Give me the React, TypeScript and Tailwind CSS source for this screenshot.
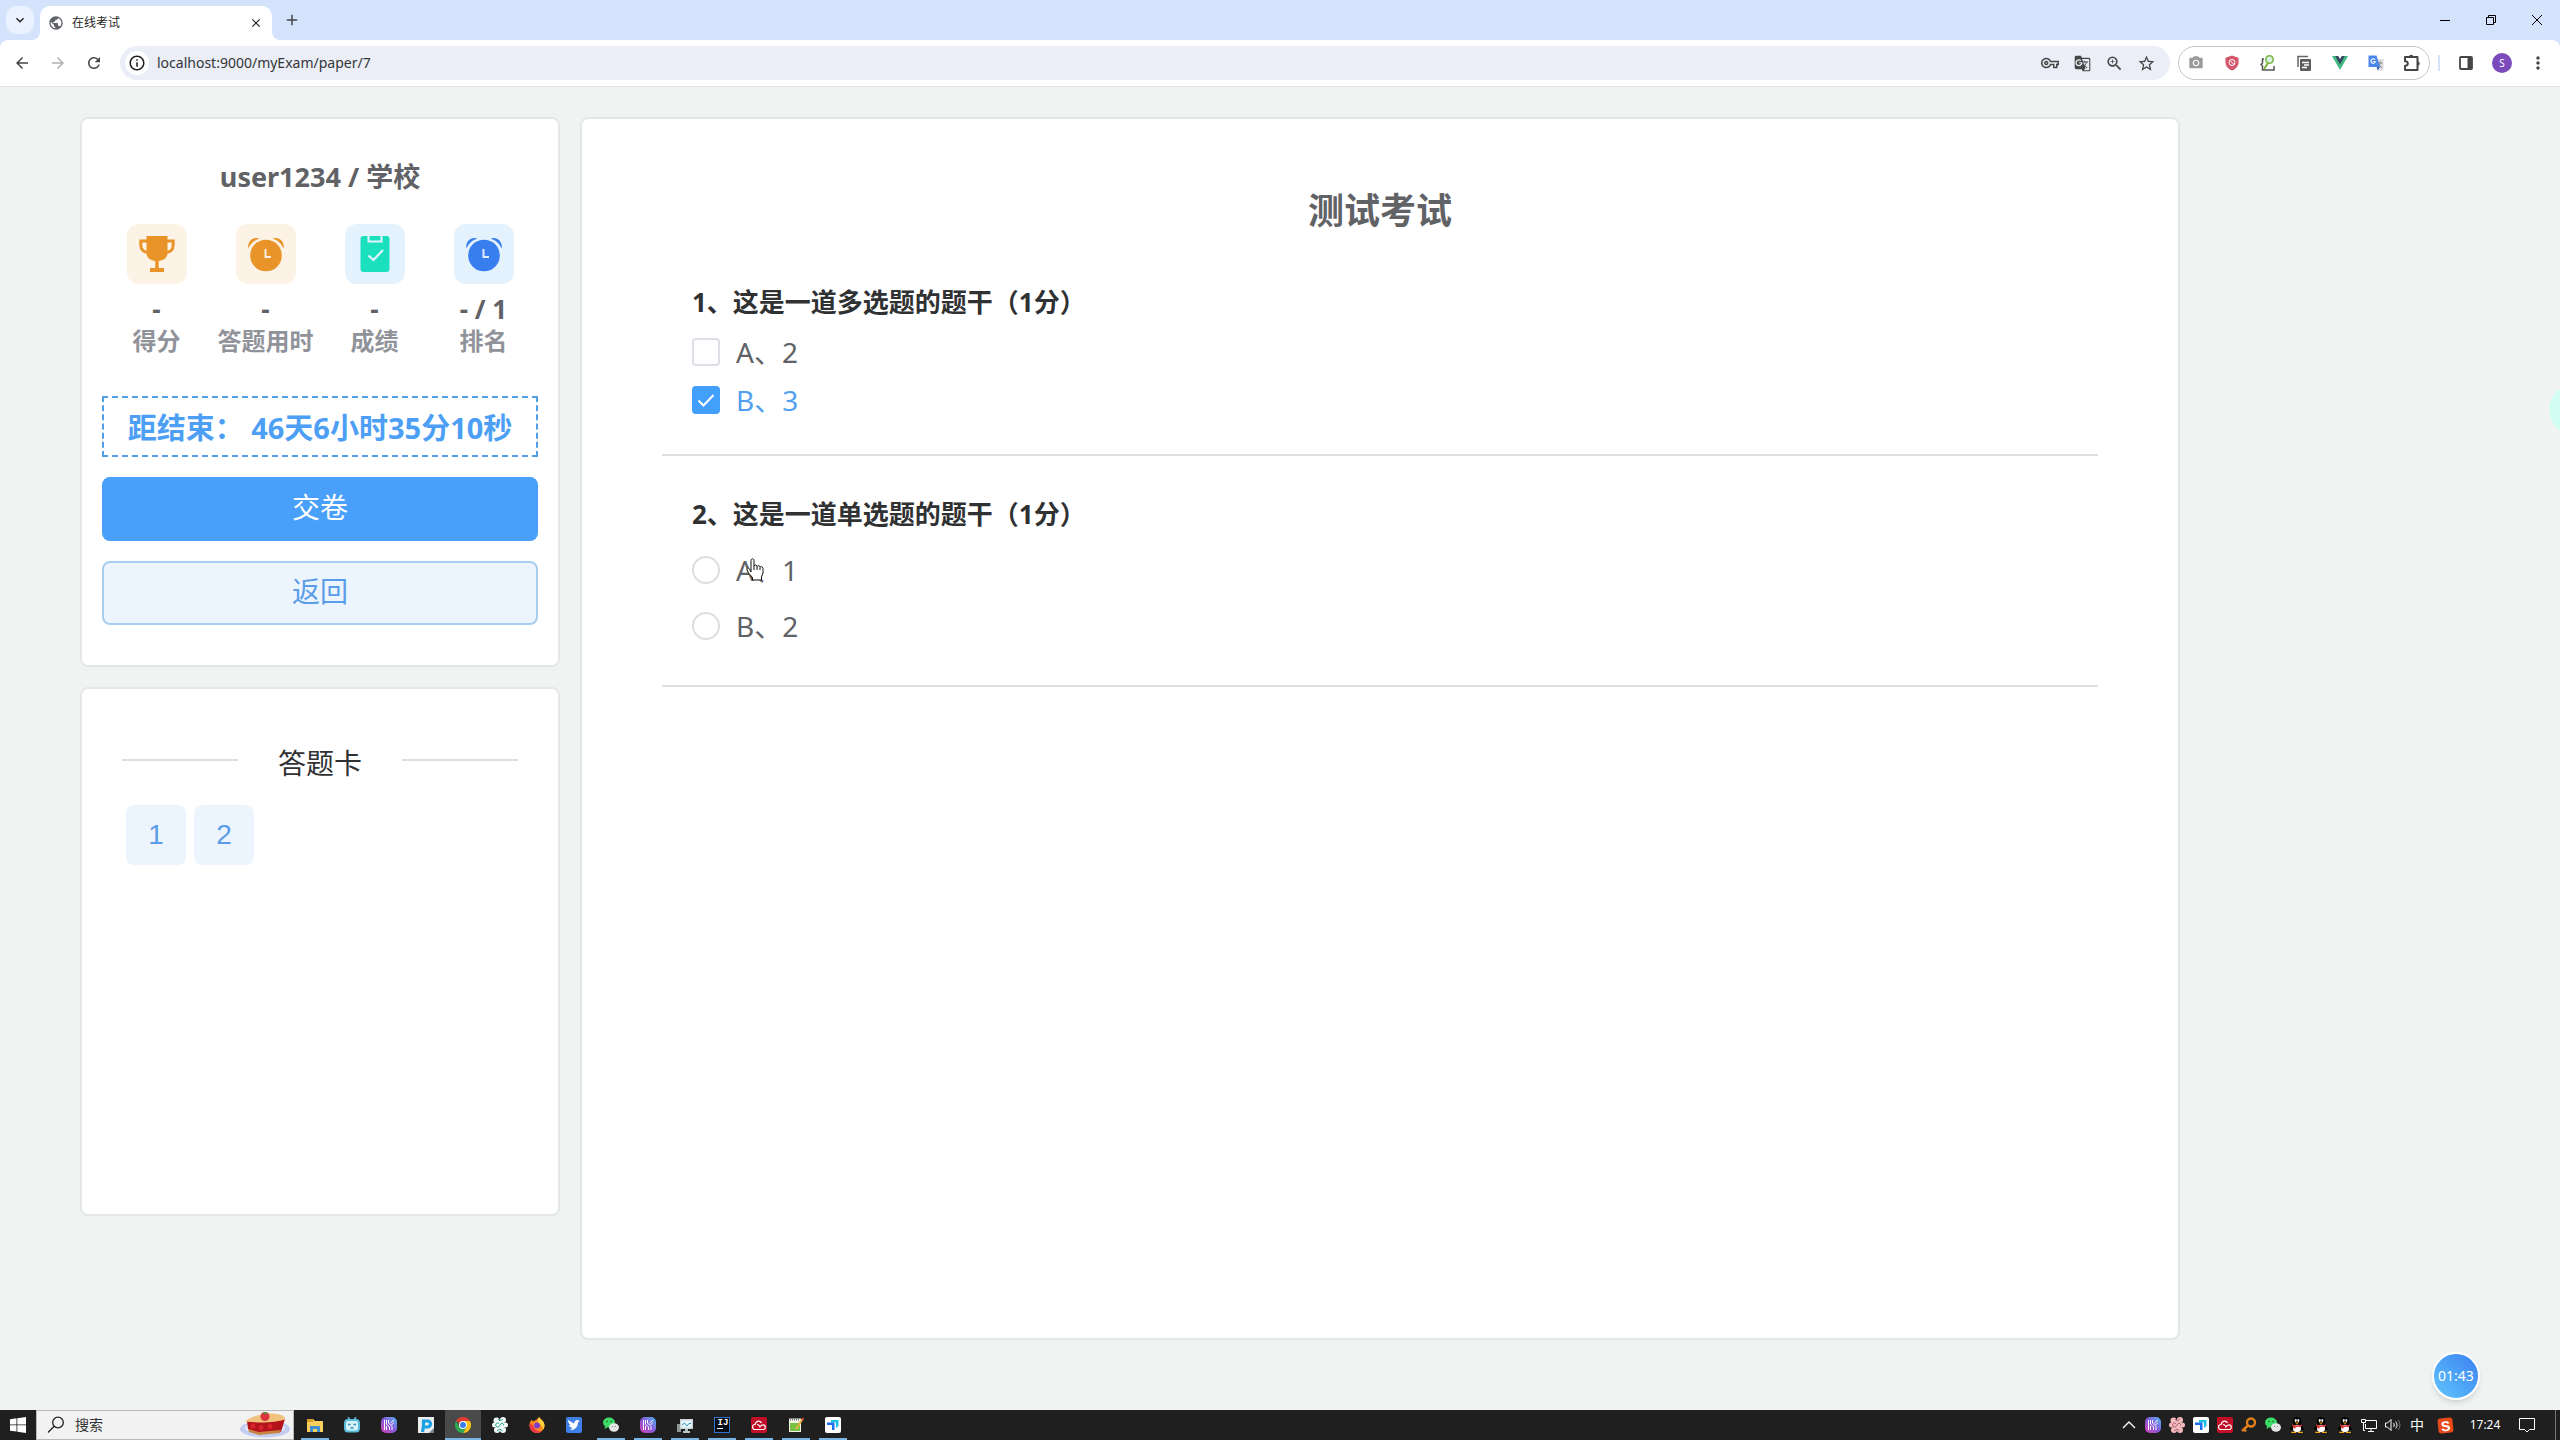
import React, { useState } from 'react';
import {
  MdAdd,
  MdArrowBack,
  MdArrowForward,
  MdCameraAlt,
  MdClose,
  MdExpandMore,
  MdGTranslate,
  MdMoreVert,
  MdOutlineExtension,
  MdOutlineInfo,
  MdOutlineVpnKey,
  MdPublic,
  MdRefresh,
  MdStarBorder,
  MdZoomIn,
} from 'react-icons/md';

/* ---------- browser window ---------- */

const TabStrip: React.FC = () => (
  <div className="flex h-10 items-end bg-[#d5e2fb] pl-1.5">
    <button aria-label="搜索标签页" className="mb-1.5 flex size-7 items-center justify-center rounded-[10px] bg-[#e9f2fe]">
      <MdExpandMore className="size-4 text-[#1f1f1f]" />
    </button>
    <div className="relative ml-1.5 flex h-[34px] w-[232px] items-center rounded-t-[10px] bg-white pr-2 pl-2">
      {/* feet of the active tab */}
      <span className="absolute bottom-0 -left-2 size-2 bg-white">
        <span className="block size-2 rounded-br-lg bg-[#d5e2fb]" />
      </span>
      <span className="absolute -right-2 bottom-0 size-2 bg-white">
        <span className="block size-2 rounded-bl-lg bg-[#d5e2fb]" />
      </span>
      <MdPublic className="size-4 text-[#5f6368]" />
      <span className="ml-2 flex-1 text-xs leading-4 text-[#1f1f1f]">在线考试</span>
      <button aria-label="关闭标签页" className="flex size-4 items-center justify-center">
        <MdClose className="size-3.5 text-[#1f1f1f]" />
      </button>
    </div>
    <button aria-label="新标签页" className="mb-2.5 ml-2.5 flex size-5 items-center justify-center">
      <MdAdd className="size-[18px] text-[#444746]" />
    </button>
    <div className="ml-auto flex h-10 text-black">
      <button aria-label="最小化" className="flex w-[46px] items-center justify-center">
        <svg className="size-2.5" viewBox="0 0 10 10" stroke="currentColor"><path d="M0 5.5h10" /></svg>
      </button>
      <button aria-label="还原" className="flex w-[46px] items-center justify-center">
        <svg className="size-2.5" viewBox="0 0 10 10" fill="none" stroke="currentColor">
          <path d="M.5 2.5h7v7h-7zM2.5 2.5v-2h7v7h-2" />
        </svg>
      </button>
      <button aria-label="关闭" className="flex w-[46px] items-center justify-center">
        <svg className="size-2.5" viewBox="0 0 10 10" fill="none" stroke="currentColor"><path d="M0 0l10 10M10 0L0 10" /></svg>
      </button>
    </div>
  </div>
);

const extButton = 'flex w-9 shrink-0 items-center justify-center';

const Toolbar: React.FC = () => (
  <div className="bg-[#d5e2fb]">
    <div className="flex h-[47px] items-center rounded-t-lg border-b border-[#dfe1e3] bg-white pl-1 text-[#444746]">
      <button aria-label="后退" className={extButton}><MdArrowBack className="size-[18px]" /></button>
      <button aria-label="前进" className={extButton}><MdArrowForward className="size-[18px] text-[#b0b2b2]" /></button>
      <button aria-label="重新加载" className={extButton}><MdRefresh className="size-[18px]" /></button>
      <div className="ml-2 flex h-[34px] flex-1 items-center rounded-full bg-[#ebeef6] pr-2 pl-[5px]">
        <span className="flex size-6 items-center justify-center rounded-full bg-white">
          <MdOutlineInfo className="size-[18px] text-[#1f1f1f]" />
        </span>
        <input
          aria-label="地址栏"
          className="ml-2 flex-1 bg-transparent text-sm leading-5 text-[#333638] outline-none"
          defaultValue="localhost:9000/myExam/paper/7"
        />
        <button aria-label="密码" className="flex w-8 items-center justify-center"><MdOutlineVpnKey className="size-[18px]" /></button>
        <button aria-label="翻译" className="flex w-8 items-center justify-center"><MdGTranslate className="size-[17px]" /></button>
        <button aria-label="缩放" className="flex w-8 items-center justify-center"><MdZoomIn className="size-[19px]" /></button>
        <button aria-label="收藏" className="flex w-8 items-center justify-center"><MdStarBorder className="size-[19px]" /></button>
      </div>
      <div className="ml-2 flex h-[34px] w-[252px] items-center justify-center rounded-full border border-[#c7c7c7]">
        <button aria-label="截图" className={extButton}><MdCameraAlt className="size-4 text-[#9a9a9a]" /></button>
        <button aria-label="拦截" className={extButton}>
          <svg className="size-4" viewBox="0 0 16 16" fill="none">
            <path d="M8 .5l6.5 2.2v4.5c0 4-2.800 6.800-6.500 8.300C4.300 14 1.500 11.200 1.500 7.200V2.700z" fill="#d4566a" />
            <circle cx="8" cy="7.500" r="3" stroke="#fff" />
            <path d="M6 5.500l4 4" stroke="#fff" />
          </svg>
        </button>
        <button aria-label="代码搜索" className={extButton}>
          <svg className="size-4" viewBox="0 0 16 16" fill="none">
            <path d="M4 4H2.500v4L1 9.500 2.500 11v4H14v-4" stroke="#555" strokeWidth="1.500" />
            <circle cx="9.500" cy="4.500" r="3.700" fill="#d9efe0" stroke="#7cb740" strokeWidth="1.600" />
            <path d="M8 8l-4 6" stroke="#7cb740" strokeWidth="2.200" />
          </svg>
        </button>
        <button aria-label="复制" className={extButton}>
          <svg className="size-4" viewBox="0 0 16 16" fill="none">
            <path d="M2 12V1.500h10" stroke="#666" strokeWidth="1.500" />
            <rect x="4" y="4" width="11" height="12" rx="1" fill="#5c5c5c" />
            <path d="M6 7.500h7M8 10h5M6 12.500h5" stroke="#fff" strokeWidth="1.300" />
          </svg>
        </button>
        <button aria-label="Vue" className={extButton}>
          <svg className="size-4" viewBox="0 0 16 16">
            <path d="M0 1h16L8 15z" fill="#42b883" />
            <path d="M3.200 1h9.600L8 9.500z" fill="#35495e" />
            <path d="M6.200 1h3.600L8 4z" fill="#fff" />
          </svg>
        </button>
        <button aria-label="谷歌翻译" className={extButton}>
          <svg className="size-4" viewBox="0 0 16 16" fill="none">
            <path d="M6 4h9.500v11.500H9z" fill="#dcdcdc" />
            <path d="M9.500 8h5M12 6.500V8c0 2-1 3.500-2.500 4.500M10.500 9c.5 1.500 2 2.800 3.500 3.500" stroke="#7d8790" />
            <path d="M.5.500h8l3.500 11.500H.500z" fill="#4a86ea" />
            <path d="M9 12h3l-2.500 3.500z" fill="#2d5fc4" />
            <path d="M7 4.800a2.200 2.200 0 1 0 .3 1.700H5.200" stroke="#fff" strokeWidth="1.100" />
          </svg>
        </button>
        <button aria-label="扩展程序" className={extButton}>
          <svg className="size-[18px]" viewBox="0 0 18 18" fill="none">
            <path d="M2 3h12.500v13H2v-4.200c1.800 0 2.800-1 2.800-2.300S3.800 7.200 2 7.200z" stroke="currentColor" strokeWidth="2" strokeLinejoin="round" />
            <path d="M6 3a2.200 2.200 0 0 1 4.400 0zM14.500 7.300a2.200 2.200 0 0 1 0 4.400z" fill="currentColor" />
          </svg>
        </button>
      </div>
      <span className="ml-2 h-4 w-0.5 bg-[#d5e2fb]" />
      <button aria-label="侧边栏" className="ml-2 flex w-9 items-center justify-center">
        <svg className="size-3.5" viewBox="0 0 14 14" fill="none">
          <rect x="1" y="1" width="12" height="12" rx="1" stroke="currentColor" strokeWidth="1.800" />
          <path d="M8.500 1H13v12H8.500z" fill="currentColor" />
        </svg>
      </button>
      <button aria-label="用户" className={extButton}>
        <span className="flex size-5 items-center justify-center rounded-full bg-[#7b4bbb] text-[10px] leading-none text-white">S</span>
      </button>
      <button aria-label="更多" className="mr-1 flex w-9 items-center justify-center"><MdMoreVert className="size-5" /></button>
    </div>
  </div>
);

/* ---------- exam page ---------- */

const TrophyIcon = () => (
  <svg className="size-9" viewBox="0 0 36 36" fill="none">
    <path d="M7.500 0h21v17c0 5-4.500 8-10.500 8S7.500 22 7.500 17z" fill="#e99428" />
    <path d="M9 5H1.800v4c0 4.500 3 7.300 7.300 7.300M27 5h7.200v4c0 4.500-3 7.300-7.300 7.300" stroke="#e99428" strokeWidth="3" />
    <path d="M16.200 24h3.500v8H25v4H11v-4h5.200z" fill="#e99428" />
  </svg>
);

const AlarmIcon: React.FC<{ color: string }> = ({ color }) => (
  <svg className="size-9" viewBox="0 0 36 36" fill="none">
    <circle cx="18" cy="19.500" r="15.800" fill={color} />
    <path d="M.5 12.500C-1 6 4.500 0 11.500 2.500 6.500 4 2.500 7.500.5 12.500zM35.500 12.500C37 6 31.500 0 24.500 2.500c5 1.500 9 5 11 10z" fill={color} />
    <path d="M17.500 13v8H23" stroke="#fff" strokeOpacity=".85" strokeWidth="2" />
  </svg>
);

const ClipboardIcon = () => (
  <svg className="size-9" viewBox="0 0 36 36" fill="none">
    <rect x="3.500" y="0" width="29" height="36" rx="3" fill="#1be0bd" />
    <path d="M11.500 0v5.500h13V0" stroke="#e3f2fd" strokeWidth="2" />
    <path d="M11.500 19.500l5 4.500 9.500-10" stroke="#e3f2fd" strokeWidth="2.200" />
  </svg>
);

const stats = [
  { label: '得分', value: '-', tile: 'bg-[#fcf2e5]', icon: <TrophyIcon /> },
  { label: '答题用时', value: '-', tile: 'bg-[#fcf2e5]', icon: <AlarmIcon color="#e99428" /> },
  { label: '成绩', value: '-', tile: 'bg-[#e3f2fd]', icon: <ClipboardIcon /> },
  { label: '排名', value: '- / 1', tile: 'bg-[#e3f2fd]', icon: <AlarmIcon color="#397eef" /> },
];

const SummaryCard: React.FC = () => (
  <section className="rounded-lg border-2 border-[#e4e7e9] bg-white px-5 pt-[38px] pb-10">
    <h2 className="text-center text-[27px] leading-10 font-bold text-[#606266]">user1234 / 学校</h2>
    <ul className="mt-[27px] grid grid-cols-4">
      {stats.map((s) => (
        <li key={s.label} className="flex flex-col items-center font-bold whitespace-nowrap">
          <span className={`flex size-[60px] items-center justify-center rounded-xl ${s.tile}`}>{s.icon}</span>
          <span className="mt-2.5 text-[26px] leading-[31px] text-[#606266]">{s.value}</span>
          <span className="text-2xl leading-8 text-[#909399]">{s.label}</span>
        </li>
      ))}
    </ul>
    <p className="mt-[39px] border-2 border-dashed border-[#539fe8] pt-[9px] pb-[7px] text-center text-[29px] leading-[41px] font-bold text-[#4d9ff5]">
      距结束： 46天6小时35分10秒
    </p>
    <button className="mt-5 h-16 w-full rounded-lg bg-[#48a0fb] pb-1 text-[28px] leading-10 text-white">交卷</button>
    <button className="mt-5 h-16 w-full rounded-lg border-2 border-[#a9cdee] bg-[#ecf5fd] pb-1 text-[28px] leading-10 text-[#5a9ce8]">
      返回
    </button>
  </section>
);

const AnswerCard: React.FC = () => (
  <section className="min-h-[529px] rounded-lg border-2 border-[#e4e7e9] bg-white px-10 pt-[54px]">
    <div className="flex items-center gap-10">
      <span className="mb-1.5 h-0.5 flex-1 bg-[#dcdfe0]" />
      <h2 className="text-[28px] leading-10 text-[#303133]">答题卡</h2>
      <span className="mb-1.5 h-0.5 flex-1 bg-[#dcdfe0]" />
    </div>
    <div className="mt-[22px] flex gap-2 px-1">
      {[1, 2].map((n) => (
        <button
          key={n}
          className="size-[60px] rounded-lg bg-[#ecf5fd] font-['Liberation_Sans',sans-serif] text-[28px] leading-10 text-[#5a9ce8]"
        >
          {n}
        </button>
      ))}
    </div>
  </section>
);

const HandCursor = () => (
  <svg className="absolute top-2 left-[54px] h-[23px] w-[18px]" viewBox="0 0 18 23">
    <path
      d="M5 14V2.500C5 .2 8 .2 8 2.500V8c.5-1.500 3-1.300 3 .5.500-1.300 3-1 3 .8.600-1.200 3-.8 3 1.200V15l-1.500 4v3h-9v-2.500L2.500 15 1 11.500C.6 9.800 2.500 9.500 3.500 11z"
      fill="#fff"
      stroke="#111"
    />
    <path d="M8 8v4M11 8.500V12M14 9.500V12" stroke="#111" />
  </svg>
);

const MultiChoice: React.FC = () => {
  const [picked, setPicked] = useState(['B']);
  const toggle = (k: string) => setPicked((p) => (p.includes(k) ? p.filter((x) => x !== k) : [...p, k]));

  return (
    <div className="mt-2.5 flex flex-col items-start gap-2">
      {[['A', '2'], ['B', '3']].map(([k, text]) => (
        <label key={k} className="flex items-center gap-4">
          <span className="relative flex size-7">
            <input
              type="checkbox"
              className="peer size-7 appearance-none rounded border-2 border-[#dcdfe6] bg-white checked:border-[#429ffb] checked:bg-[#429ffb]"
              checked={picked.includes(k)}
              onChange={() => toggle(k)}
            />
            <svg className="pointer-events-none absolute inset-0 hidden size-7 peer-checked:block" viewBox="0 0 28 28" fill="none">
              <path d="M6.500 14.500l5 5L21.500 9" stroke="#fff" strokeWidth="2" />
            </svg>
          </span>
          <span className={`text-[28px] leading-10 ${picked.includes(k) ? 'text-[#529ff0]' : 'text-[#606266]'}`}>{k}、{text}</span>
        </label>
      ))}
    </div>
  );
};

const SingleChoice: React.FC = () => (
  <div className="mt-4 flex flex-col items-start gap-4">
    {[['A', '1'], ['B', '2']].map(([k, text], i) => (
      <label key={k} className="relative flex items-center gap-4">
        <input
          type="radio"
          name="q2"
          className="size-7 appearance-none rounded-full border-2 border-[#dcdfe0] bg-white checked:border-8 checked:border-[#429ffb]"
        />
        <span className="text-[28px] leading-10 text-[#606266]">{k}、{text}</span>
        {i === 0 && <HandCursor />}
      </label>
    ))}
  </div>
);

const Paper: React.FC = () => (
  <main className="flex-1 rounded-lg border-2 border-[#e4e7e9] bg-white px-20 pt-[67px]">
    <h1 className="text-center text-4xl leading-[50px] font-bold text-[#606266]">测试考试</h1>
    <section className="mt-[46px] border-b-2 border-[#dddfe3] px-[30px] pb-[34px]">
      <h3 className="text-[26px] leading-10 font-bold text-[#303133]">1、这是一道多选题的题干（1分）</h3>
      <MultiChoice />
    </section>
    <section className="mt-[38px] border-b-2 border-[#dddfe3] px-[30px] pb-[39px]">
      <h3 className="text-[26px] leading-10 font-bold text-[#303133]">2、这是一道单选题的题干（1分）</h3>
      <SingleChoice />
    </section>
  </main>
);

/* ---------- taskbar ---------- */

const icon = 'size-4 shrink-0';

const FolderIcon = () => (
  <svg className={icon} viewBox="0 0 16 16">
    <path d="M0 2h6l2 2h8v11H0z" fill="#f8cf5c" />
    <path d="M0 2h6v3H0z" fill="#d99f2b" />
    <path d="M3 9h10v6h-3v-3H6v3H3z" fill="#3f8fd2" />
  </svg>
);
const BiliIcon = () => (
  <svg className={icon} viewBox="0 0 16 16" fill="none">
    <path d="M4 0l2 3M12 0l-2 3" stroke="#58bcd8" strokeWidth="1.500" />
    <rect x="1" y="3" width="14" height="11.500" rx="3" fill="#d5f2f8" stroke="#58bcd8" strokeWidth="2" />
    <path d="M4 7.500h2.500M9.500 7.500H12M6.500 11h3" stroke="#2d8fae" strokeWidth="1.300" />
  </svg>
);
const StripesIcon = () => (
  <span className="flex size-4 shrink-0 items-center justify-center rounded-[5px] bg-linear-to-bl from-[#2bb4f5] via-[#8557d8] to-[#d53ab8]">
    <svg className="size-2.5" viewBox="0 0 10 10" fill="none" stroke="#fff">
      <path d="M.5 0v10M2.500 0v4l3 3v3M2.500 6v4M4.500 0v3L8 6.500V10M10 0L6.500 3M10 2.500L7.500 5" />
    </svg>
  </span>
);
const PaintIcon = () => (
  <svg className={icon} viewBox="0 0 16 16" fill="none">
    <path d="M0 0h16v16H0z" fill="#e9eef0" />
    <path d="M11 16l5-5v5z" fill="#77838a" />
    <path d="M4.500 15l1-5.500V4h4a3 3 0 0 1 0 6H7" stroke="#19a0e5" strokeWidth="3.200" />
  </svg>
);
const ChromeIcon = () => (
  <svg className={icon} viewBox="0 0 16 16">
    <path d="M8 8L1.070 4A8 8 0 0 1 14.930 4z" fill="#e33b2e" />
    <path d="M8 4h6.930A8 8 0 0 1 8 16l3.500-6z" fill="#fbc116" />
    <path d="M1.070 4A8 8 0 0 0 8 16l3.460-6L4.500 10z" fill="#2da94f" />
    <circle cx="8" cy="8" r="4" fill="#fff" />
    <circle cx="8" cy="8" r="3" fill="#3b7ded" />
  </svg>
);
const KnotIcon: React.FC<{ petal: string; line: string }> = ({ petal, line }) => (
  <svg className={icon} viewBox="0 0 16 16" fill="none">
    <circle cx="4.500" cy="3.500" r="3" fill={petal} />
    <circle cx="11" cy="3" r="3" fill={petal} />
    <circle cx="13.500" cy="8" r="2.500" fill={petal} />
    <circle cx="11" cy="13" r="3" fill={petal} />
    <circle cx="5" cy="13" r="3" fill={petal} />
    <circle cx="2.500" cy="8" r="2.500" fill={petal} />
    <circle cx="8" cy="8" r="4.500" fill={petal} />
    <path d="M7 6.500a2 2 0 1 0 0 3c1-.8 1-2.200 2-3 1.500-1 3 .5 2.500 2M6 2l2 2 3-2M5 14l3-2 2.500 2" stroke={line} />
  </svg>
);
const FirefoxIcon = () => (
  <svg className={icon} viewBox="0 0 16 16">
    <path d="M10 0c1 2 5.500 4 5.500 8.500A7.500 7.500 0 0 1 .5 8.500C.5 6 1.500 3.500 3 2.500c0 1 .5 1.500 1 2C5.500 3.500 8.500 3 10 0z" fill="#ff8a1e" />
    <path d="M10 0c1 2 5.500 4 5.500 8.500 0 1.500-.5 3-1.200 4C13 8 11 7 9 5.500 8.500 3.500 9 1.500 10 0z" fill="#ffd33d" />
    <path d="M.5 8.500A7.500 7.500 0 0 0 13 14c-4 1-8-1-9-6C2.500 8 1.500 7 1 6z" fill="#f0374a" />
    <circle cx="8" cy="8.500" r="3" fill="#7b3fd1" />
  </svg>
);
const BirdIcon = () => (
  <svg className={icon} viewBox="0 0 16 16">
    <rect width="16" height="16" rx="2" fill="#3f7fe8" />
    <path d="M2 3l6 3.500C8.500 4 10 2.500 12 3l2 1.500-2 .5c0 4-2 7-6 8H4l2.500-2C4 10.500 3 9 3 8l2 .3C3 7 2 5 2 3z" fill="#fff" />
  </svg>
);
const WechatIcon = () => (
  <svg className={icon} viewBox="0 0 16 16">
    <ellipse cx="6" cy="5.500" rx="6" ry="5" fill="#3ddc66" />
    <path d="M2 9l-.5 3L5 10z" fill="#3ddc66" />
    <ellipse cx="11" cy="10.500" rx="5" ry="4.200" fill="#e6e6e6" />
    <circle cx="4" cy="4.500" r=".8" fill="#185c2b" />
    <circle cx="8" cy="4.500" r=".8" fill="#185c2b" />
    <circle cx="9.500" cy="9.500" r=".6" fill="#777" />
    <circle cx="12.500" cy="9.500" r=".6" fill="#777" />
  </svg>
);
const MonitorIcon = () => (
  <svg className={icon} viewBox="0 0 16 16" fill="none">
    <path d="M0 7h4v8H0z" fill="#8c9a92" />
    <rect x="3" y="2" width="13" height="10" fill="#cdd5d8" />
    <rect x="4.500" y="3.500" width="10" height="7" fill="#e8f7fb" />
    <path d="M5 8l2.500-2L10 9l2-2.500h2" stroke="#2b93b8" />
    <path d="M8 12h3v2h2v2H6v-2h2z" fill="#b9c2c5" />
  </svg>
);
const IdeaIcon = () => (
  <span className="flex size-4 shrink-0 flex-col border border-[#2f74d0] bg-[#0b0d14] pl-0.5 font-['Liberation_Mono',monospace] text-[9px] leading-[10px] font-bold text-white">
    IJ
    <span className="h-px w-1.5 bg-white" />
  </span>
);
const CloudIcon = () => (
  <svg className={icon} viewBox="0 0 16 16" fill="none">
    <rect width="16" height="16" rx="2" fill="#c20f28" />
    <path d="M4 12.500a2.500 2.500 0 0 1 0-5C5 3.500 9 3 10.500 6M4 12.500h8a2.300 2.300 0 0 0 0-4.600c-1.500 0-2.500 1-3.500 2.600M6 7.500c1.500 0 2.200.8 3 2" stroke="#fff" strokeWidth="1.200" />
  </svg>
);
const NoteIcon = () => (
  <svg className={icon} viewBox="0 0 16 16" fill="none">
    <path d="M1 1.500h12V15H1z" fill="#f3f5e9" />
    <path d="M2 6h10v8H2z" fill="#76c043" />
    <path d="M2 2.500h10" stroke="#777" strokeDasharray="1 1" strokeWidth="2" />
    <path d="M14.500 2L8 12" stroke="#e3b23c" strokeWidth="2.200" />
    <path d="M15.500 1l-1.500 2" stroke="#c44" strokeWidth="2" />
  </svg>
);
const TodeskIcon = () => (
  <svg className={icon} viewBox="0 0 16 16">
    <rect width="16" height="16" rx="2" fill="#fff" />
    <path d="M6 3h7.500v6l-2.500 2V5.500H6z" fill="#15c3e8" />
    <path d="M2 5.500h7.500V13H7V8H2z" fill="#1c6ff0" />
  </svg>
);
const KeyIcon = () => (
  <svg className={icon} viewBox="0 0 16 16" fill="none" stroke="#e0801c">
    <circle cx="10" cy="5.500" r="4" strokeWidth="2.400" />
    <path d="M7 8.500L1 14M3 12l2 2.500" strokeWidth="2.400" />
  </svg>
);
const QQIcon = () => (
  <svg className={icon} viewBox="0 0 16 16">
    <path d="M3.500 8L.5 12.500l3 .5zM12.500 8l3 4.500-3 .5z" fill="#000" />
    <ellipse cx="8" cy="10.500" rx="5.200" ry="5" fill="#000" />
    <ellipse cx="8" cy="4.500" rx="4.200" ry="4.500" fill="#000" />
    <ellipse cx="8" cy="11.500" rx="4" ry="3.800" fill="#fff" />
    <path d="M3 7.500c3 1.200 7 1.200 10 0v1.600c-3 1.300-7 1.300-10 0z" fill="#e02a2a" />
    <path d="M4.500 9h2v2.500h-2z" fill="#e02a2a" />
    <ellipse cx="6.700" cy="3.500" rx="1" ry="1.400" fill="#fff" />
    <ellipse cx="9.300" cy="3.500" rx="1" ry="1.400" fill="#fff" />
    <path d="M5.500 5.600h5L8 7z" fill="#f7a91e" />
    <path d="M2.500 14.800H7V16H2zM9 14.800h4.500l.5 1.200H9z" fill="#f7a91e" />
  </svg>
);

const apps = [
  { name: '文件资源管理器', icon: <FolderIcon />, open: true },
  { name: '哔哩哔哩', icon: <BiliIcon /> },
  { name: '录屏', icon: <StripesIcon /> },
  { name: '画图', icon: <PaintIcon /> },
  { name: 'Chrome', icon: <ChromeIcon />, open: true, active: true },
  { name: '同步', icon: <KnotIcon petal="#f2fbf8" line="#2fa58c" /> },
  { name: 'Firefox', icon: <FirefoxIcon /> },
  { name: '飞鸟', icon: <BirdIcon /> },
  { name: '微信', icon: <WechatIcon />, open: true },
  { name: '录屏工具', icon: <StripesIcon />, open: true },
  { name: '资源监视器', icon: <MonitorIcon />, open: true },
  { name: 'IntelliJ IDEA', icon: <IdeaIcon />, open: true },
  { name: '云音乐', icon: <CloudIcon />, open: true },
  { name: 'Notepad++', icon: <NoteIcon />, open: true },
  { name: 'ToDesk', icon: <TodeskIcon />, open: true },
];

const tray = [
  <svg className={icon} viewBox="0 0 16 16" fill="none" stroke="#fff" strokeWidth="1.300"><path d="M2 11l6-6 6 6" /></svg>,
  <StripesIcon />,
  <KnotIcon petal="#f3b9bd" line="#a8667a" />,
  <TodeskIcon />,
  <CloudIcon />,
  <KeyIcon />,
  <WechatIcon />,
  <QQIcon />,
  <QQIcon />,
  <QQIcon />,
  <svg className={icon} viewBox="0 0 16 16" fill="none" stroke="#fff">
    <path d="M5 3.500h10.500v8H4.500V7M7 14.500h6M10 11.500v3M.5 2.500h4v3h-4zM2.500 5.500v8H4" />
  </svg>,
  <svg className={icon} viewBox="0 0 16 16" fill="none" stroke="#fff">
    <path d="M.5 6h2L6 2.500v11L2.500 10h-2zM8.500 6c1 1.200 1 2.800 0 4M10.500 4.500c2 2 2 5 0 7" />
    <path d="M13 3c2.500 3 2.500 7 0 10" strokeOpacity=".4" />
  </svg>,
];

const Taskbar: React.FC = () => (
  <footer className="flex h-[30px] items-stretch bg-[#1f1f1f]">
    <button aria-label="开始" className="flex w-9 items-center justify-center">
      <svg className="size-4" viewBox="0 0 16 16" fill="#fff">
        <path d="M0 2.200l6.500-.9v6.200H0zM7.300 1.200L16 0v7.500H7.300zM0 8.300h6.500v6.300L0 13.700zM7.300 8.300H16V16l-8.700-1.200z" />
      </svg>
    </button>
    <div className="flex w-[258px] items-center border border-[#b8b8b8] bg-[#f2f2f2] pr-0.5 pl-2.5">
      <svg className="size-[18px]" viewBox="0 0 18 18" fill="none" stroke="#222" strokeWidth="1.300">
        <circle cx="11" cy="6.500" r="5.300" />
        <path d="M7.200 10.300L1 16.500" />
      </svg>
      <input
        aria-label="搜索"
        placeholder="搜索"
        className="ml-2.5 w-0 flex-1 bg-transparent text-sm leading-5 outline-none placeholder:text-[#333]"
      />
      <svg className="h-[26px] w-[52px]" viewBox="0 0 52 26">
        <ellipse cx="26" cy="17" rx="25" ry="8.500" fill="#c3cdf2" />
        <ellipse cx="26" cy="16" rx="20" ry="6" fill="#e4e9fb" />
        <path d="M8 9l38-2-4 13-22 2-11-5z" fill="#b3141c" />
        <path d="M6 9.500C12 4 24 1 34 1.500c6 .5 13 2 12 6C36 11 18 11 6 9.500z" fill="#f1c27e" />
        <path d="M9 17l11 3 22-2-1 3-21 2-10-3z" fill="#c98443" />
        <circle cx="14" cy="14" r="2.500" fill="#d8242b" />
        <circle cx="22" cy="15.500" r="2.500" fill="#d8242b" />
        <circle cx="31" cy="14.500" r="2.500" fill="#d8242b" />
        <circle cx="26" cy="4.500" r="4.500" fill="#dd3540" />
        <path d="M23 1l3-1 3 1-2.500 1.500z" fill="#4c9a3a" />
      </svg>
    </div>
    <nav className="ml-[3px] flex gap-px">
      {apps.map((a) => (
        <button
          key={a.name}
          aria-label={a.name}
          className={`flex w-9 flex-col items-center justify-between pt-[7px] ${a.active ? 'bg-[#4a4a4a]' : ''}`}
        >
          {a.icon}
          {a.open && <span className={`h-0.5 bg-[#79b6e6] ${a.active ? 'w-9' : 'w-7'}`} />}
        </button>
      ))}
    </nav>
    <div className="ml-auto flex items-center text-white">
      {tray.map((t, i) => (
        <span key={i} className="flex w-6 justify-center">{t}</span>
      ))}
      <span className="w-6 text-center text-sm leading-5">中</span>
      <span className="mr-2 ml-1 flex w-6 justify-center">
        <span className="flex size-[15px] -rotate-6 items-center justify-center rounded-[3px] bg-[#e64a19] font-['Liberation_Sans',sans-serif] text-sm leading-none font-bold text-white">S</span>
      </span>
      <time className="w-10 text-center text-xs leading-4">17:24</time>
      <button aria-label="通知" className="mr-2.5 ml-1 flex w-9 items-center justify-center">
        <svg className="size-4" viewBox="0 0 16 16" fill="none" stroke="#fff"><path d="M.5 1.500h15v11h-5L8 15l-2.500-2.500h-5z" /></svg>
      </button>
      <span className="mr-1 h-[30px] w-px bg-[#777]" />
    </div>
  </footer>
);

const App: React.FC = () => (
  <div className="relative flex min-h-screen flex-col overflow-hidden bg-[#f1f3f3] font-['Noto_Sans','Noto_Sans_CJK_SC',sans-serif]">
    <TabStrip />
    <Toolbar />
    <div className="flex flex-1 gap-5 pt-[30px] pr-[380px] pb-[70px] pl-20">
      <aside className="flex w-[480px] shrink-0 flex-col gap-5">
        <SummaryCard />
        <AnswerCard />
      </aside>
      <Paper />
    </div>
    <Taskbar />

    {/* floating widgets above the page */}
    <span className="absolute top-96 -right-10 size-[51px] rounded-full bg-[#d2fdf3]" />
    <div className="absolute right-20 bottom-10 flex size-12 items-center justify-center rounded-full border-2 border-white bg-linear-to-tr from-[#62c6fb] to-[#3c7ff0] text-sm leading-5 text-white shadow-md">
      01:43
    </div>
  </div>
);

export default App;
